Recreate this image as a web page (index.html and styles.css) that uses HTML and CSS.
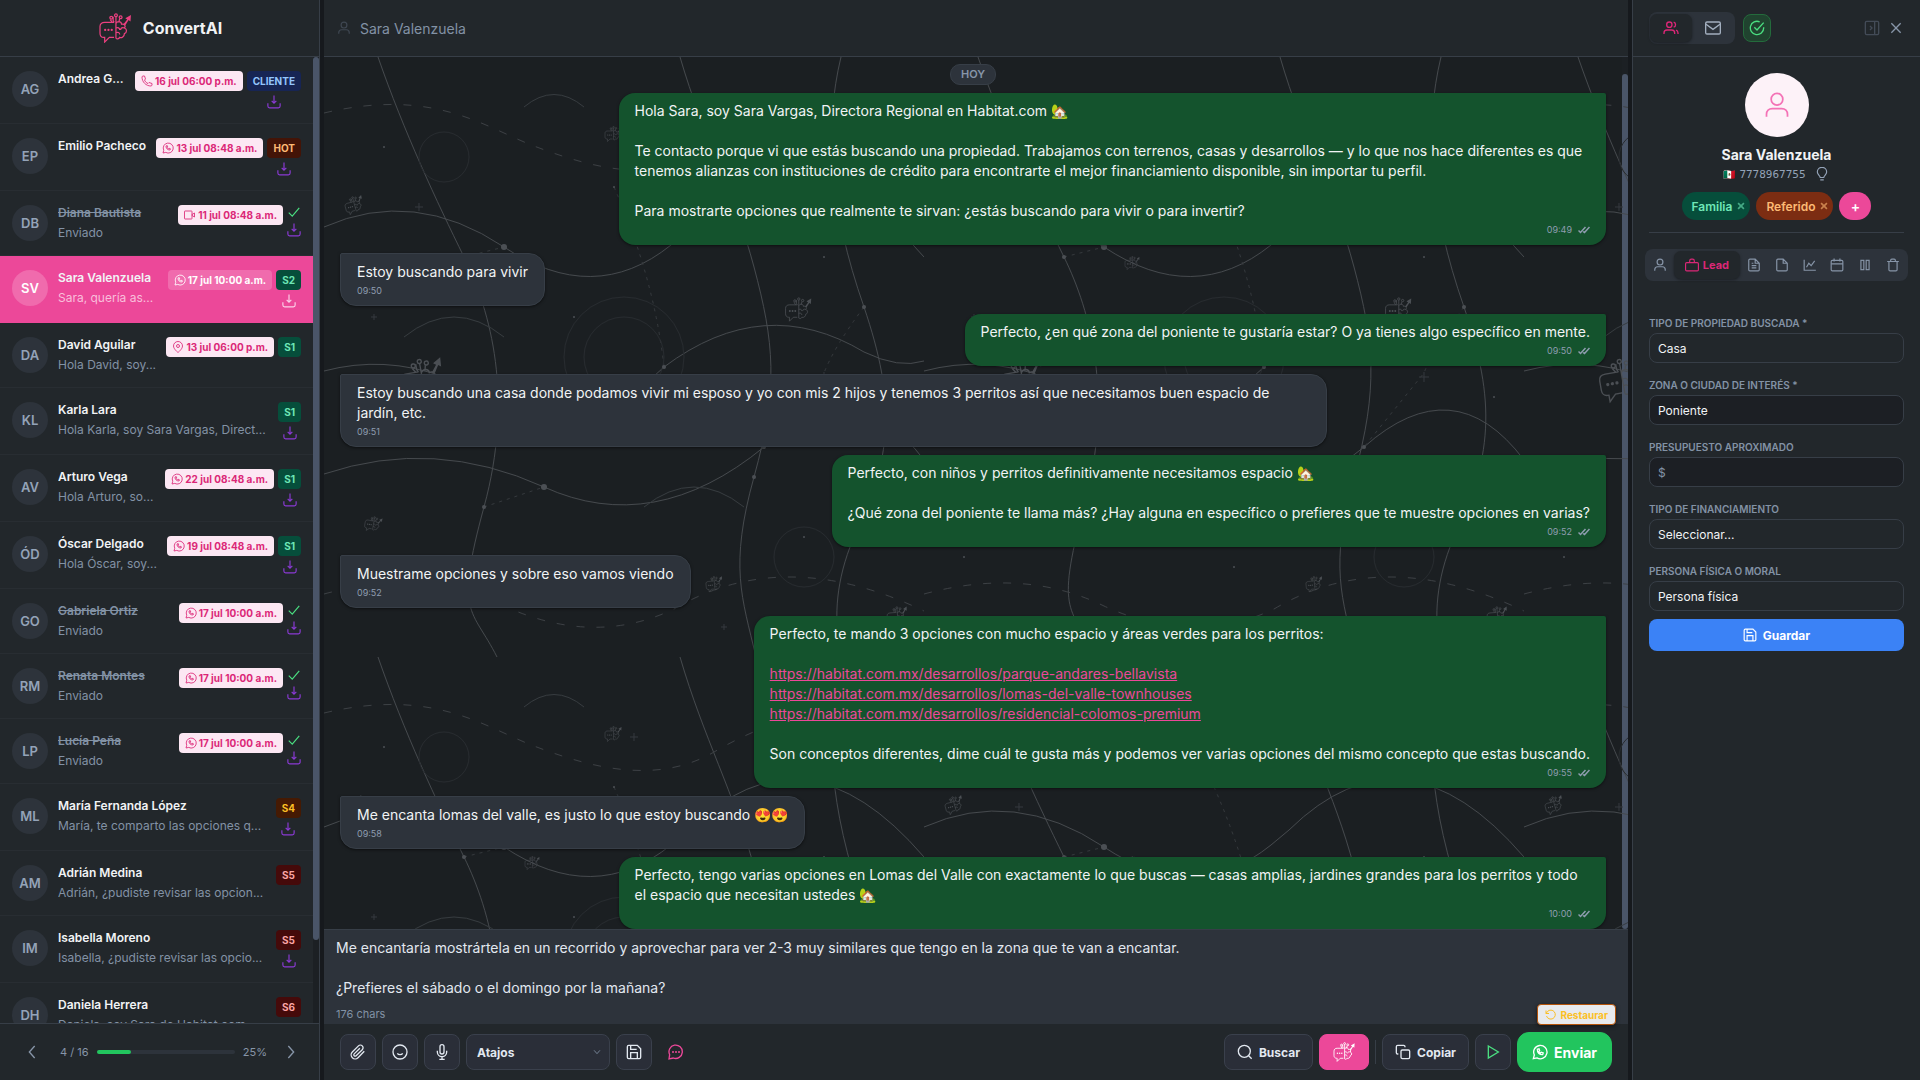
FILE: index.html
```html
<!DOCTYPE html>
<html lang="es">
<head>
  <meta charset="UTF-8" />
  <meta name="viewport" content="width=device-width, initial-scale=1" />
  <title>ConvertAI</title>
  <link rel="stylesheet" href="styles.css">
</head>
<body>
  <!-- Iconos -->
  <svg class="sprite" aria-hidden="true">
    <symbol id="logo" viewBox="0 0 36 32">
      <path d="M17 10H7c-3 0-5 1.600-5 4.500v7C2 24 3.500 26 6 26h1v5l5-5h5"/>
      <path d="M19 4v23M16 4v4l1 2M23 6l-1 4M13 7l2 3M19 11c2-3 6-2 6 1 3-1 5 2 3 4 3 1 3 5 0 6 0 3-3 5-5 4-1 2-3 2-4 1M19 16c2-1 4 0 4 2M28 16c-2-1-4 0-4 2M19 21c2-1 4 0 4 2"/>
      <circle cx="19" cy="2.500" r="1.500"/><circle cx="14" cy="5" r="1.500"/><circle cx="24" cy="4.500" r="1.500"/>
      <path class="solid" d="M27 12l4-5-2-1.500L35 2l-.5 7-2-1.500-3.500 5.500z"/>
      <circle class="solid" cx="7.500" cy="18" r="1.200"/><circle class="solid" cx="11" cy="18" r="1.200"/><circle class="solid" cx="14.500" cy="18" r="1.200"/>
    </symbol>
    <symbol id="user" viewBox="0 0 24 24"><circle cx="12" cy="7" r="5"/><path d="M3 22v-2c0-3 2-5 5-5h8c3 0 5 2 5 5v2"/></symbol>
    <symbol id="users" viewBox="0 0 24 24"><circle cx="9.500" cy="7" r="4"/><path d="M1.500 21v-1.500c0-3 2-4.500 4.500-4.500h7c2.500 0 4.500 1.500 4.500 4.500V21M16 3.200c3.800 1 3.800 6.600 0 7.600M22.500 21v-1.500c0-2-1-3.600-3-4.300"/></symbol>
    <symbol id="mail" viewBox="0 0 24 24"><rect x="1" y="3" width="22" height="18" rx="2"/><path d="M1 6l11 8 11-8"/></symbol>
    <symbol id="check-circle" viewBox="0 0 24 24"><path d="M22 11v1a10 10 0 1 1-6-9.200"/><path d="M8 11l4 4L22 4"/></symbol>
    <symbol id="panel" viewBox="0 0 24 24"><rect x="2" y="2" width="20" height="20" rx="2"/><path d="M16 2v20M9 9l3 3-3 3"/></symbol>
    <symbol id="close" viewBox="0 0 24 24"><path d="M5 5l14 14M19 5L5 19"/></symbol>
    <symbol id="bulb" viewBox="0 0 24 24"><path d="M9 18c0-3-5-5-5-9.500a8 8 0 0 1 16 0c0 4.500-5 6.500-5 9.500zM9 22h6"/></symbol>
    <symbol id="bag" viewBox="0 0 24 24"><rect x="1" y="8" width="22" height="14" rx="2"/><path d="M8 8V5a3 3 0 0 1 3-3h2a3 3 0 0 1 3 3v3"/></symbol>
    <symbol id="file" viewBox="0 0 24 24"><path d="M14 2H5a2 2 0 0 0-2 2v16a2 2 0 0 0 2 2h14a2 2 0 0 0 2-2V9zM14 2v7h7"/></symbol>
    <symbol id="file-text" viewBox="0 0 24 24"><path d="M14 2H5a2 2 0 0 0-2 2v16a2 2 0 0 0 2 2h14a2 2 0 0 0 2-2V9zM14 2v7h7M8 9h3M8 13h8M8 17h8"/></symbol>
    <symbol id="chart" viewBox="0 0 24 24"><path d="M2 3v18h20M6 16l4-7 4 4 6-8"/></symbol>
    <symbol id="calendar" viewBox="0 0 24 24"><rect x="2" y="4" width="20" height="18" rx="2"/><path d="M2 10h20M7 1v5M17 1v5"/></symbol>
    <symbol id="columns" viewBox="0 0 24 24"><rect x="5" y="4" width="5" height="16"/><rect x="14" y="4" width="5" height="16"/></symbol>
    <symbol id="trash" viewBox="0 0 24 24"><path d="M2 6h20M5 6v14a2 2 0 0 0 2 2h10a2 2 0 0 0 2-2V6M8 6V4a2 2 0 0 1 2-2h4a2 2 0 0 1 2 2v2"/></symbol>
    <symbol id="save" viewBox="0 0 24 24"><path d="M20 22H4a2 2 0 0 1-2-2V4a2 2 0 0 1 2-2h13l5 5v13a2 2 0 0 1-2 2zM17 22v-9H7v9M7 2v6h9"/></symbol>
    <symbol id="download" viewBox="0 0 24 24"><path d="M12 1v13M8 10l4 4 4-4M1.500 14v5a3 3 0 0 0 3 3h15a3 3 0 0 0 3-3v-5"/></symbol>
    <symbol id="check" viewBox="0 0 24 24"><path d="M3 13l6 6L21 5"/></symbol>
    <symbol id="whatsapp" viewBox="0 0 24 24"><path d="M2 22l1.500-5.500A10 10 0 1 1 7.500 20.800zM8 8c0 5 3 8 8 8l.8-2.500-3-1.200-1.200 1.200c-1-.5-1.600-1.200-2.200-2.200L11.500 10l-1-2.800z"/></symbol>
    <symbol id="phone" viewBox="0 0 24 24"><path d="M22 17v3c0 1-1 2-2 2C10 22 2 14 2 4c0-1 1-2 2-2h3l2 6-2 2c1 3 4 6 7 7l2-2z"/></symbol>
    <symbol id="video" viewBox="0 0 24 24"><rect x="1" y="4" width="15" height="16" rx="1"/><path d="M16 11l5-3v8l-5-3z"/></symbol>
    <symbol id="pin" viewBox="0 0 24 24"><path d="M21 10c0 6-9 13-9 13S3 16 3 10a9 9 0 0 1 18 0z"/><circle cx="12" cy="10" r="3"/></symbol>
    <symbol id="left" viewBox="0 0 24 24"><path d="M16 3l-8 9 8 9"/></symbol>
    <symbol id="right" viewBox="0 0 24 24"><path d="M8 3l8 9-8 9"/></symbol>
    <symbol id="down" viewBox="0 0 24 24"><path d="M5 8l7 8 7-8"/></symbol>
    <symbol id="clip" viewBox="0 0 24 24"><path d="M21.400 11L12 20.500a6 6 0 0 1-8.500-8.500l9.200-9.200a4 4 0 0 1 5.700 5.700l-9.200 9.200a2 2 0 0 1-2.900-2.900l8.500-8.400"/></symbol>
    <symbol id="smile" viewBox="0 0 24 24"><circle cx="12" cy="12" r="10.500"/><path d="M8 14c1.500 2.600 6.500 2.600 8 0"/></symbol>
    <symbol id="mic" viewBox="0 0 24 24"><rect x="9" y="1" width="6" height="14" rx="3"/><path d="M5 10v2a7 7 0 0 0 14 0v-2M12 19v4M8 23h8"/></symbol>
    <symbol id="chat" viewBox="0 0 24 24"><path d="M1.500 22.500l1-6.500A10 10 0 1 1 8 21z"/><circle class="solid" cx="7.500" cy="12" r="1.500"/><circle class="solid" cx="12" cy="12" r="1.500"/><circle class="solid" cx="16.500" cy="12" r="1.500"/></symbol>
    <symbol id="search" viewBox="0 0 24 24"><circle cx="11" cy="11" r="9"/><path d="M22 22l-4.500-4.500"/></symbol>
    <symbol id="copy" viewBox="0 0 24 24"><rect x="9" y="9" width="13" height="13" rx="2"/><path d="M5 15H4a2 2 0 0 1-2-2V4a2 2 0 0 1 2-2h9a2 2 0 0 1 2 2v1"/></symbol>
    <symbol id="play" viewBox="0 0 24 24"><path d="M5 3l15 9-15 9z"/></symbol>
    <symbol id="undo" viewBox="0 0 24 24"><path d="M2 3v6h6M3 14a9 9 0 1 0 2-9L2 9"/></symbol>
    <symbol id="ticks" viewBox="0 0 24 16"><path d="M1 9l4 4L15 2M10 11l3 2L23 2"/></symbol>
  </svg>

  <div class="app">
    <!-- Lista de contactos -->
    <aside class="sidebar">
      <header class="topbar brand">
        <svg class="icon brand-logo"><use href="#logo"/></svg>
        <span>ConvertAI</span>
      </header>
      <div class="list-wrap">
        <div class="list">
          <div class="item">
            <div class="avatar">AG</div>
            <div class="info"><div class="name">Andrea G...</div></div>
            <span class="date"><svg class="icon"><use href="#phone"/></svg>16 jul 06:00 p.m.</span>
            <div class="state"><span class="tag cliente">CLIENTE</span><svg class="icon dl"><use href="#download"/></svg></div>
          </div>
          <div class="item">
            <div class="avatar">EP</div>
            <div class="info"><div class="name">Emilio Pacheco</div></div>
            <span class="date"><svg class="icon"><use href="#whatsapp"/></svg>13 jul 08:48 a.m.</span>
            <div class="state"><span class="tag hot">HOT</span><svg class="icon dl"><use href="#download"/></svg></div>
          </div>
          <div class="item done">
            <div class="avatar">DB</div>
            <div class="info"><div class="name">Diana Bautista</div><div class="preview">Enviado</div></div>
            <span class="date"><svg class="icon"><use href="#video"/></svg>11 jul 08:48 a.m.</span>
            <div class="state"><svg class="icon ok"><use href="#check"/></svg><svg class="icon dl"><use href="#download"/></svg></div>
          </div>
          <div class="item active">
            <div class="avatar">SV</div>
            <div class="info"><div class="name">Sara Valenzuela</div><div class="preview">Sara, quería as...</div></div>
            <span class="date"><svg class="icon"><use href="#whatsapp"/></svg>17 jul 10:00 a.m.</span>
            <div class="state"><span class="tag green">S2</span><svg class="icon dl"><use href="#download"/></svg></div>
          </div>
          <div class="item">
            <div class="avatar">DA</div>
            <div class="info"><div class="name">David Aguilar</div><div class="preview">Hola David, soy...</div></div>
            <span class="date"><svg class="icon"><use href="#pin"/></svg>13 jul 06:00 p.m.</span>
            <div class="state"><span class="tag green">S1</span></div>
          </div>
          <div class="item">
            <div class="avatar">KL</div>
            <div class="info"><div class="name">Karla Lara</div><div class="preview">Hola Karla, soy Sara Vargas, Direct...</div></div>
            <div class="state"><span class="tag green">S1</span><svg class="icon dl"><use href="#download"/></svg></div>
          </div>
          <div class="item">
            <div class="avatar">AV</div>
            <div class="info"><div class="name">Arturo Vega</div><div class="preview">Hola Arturo, so...</div></div>
            <span class="date"><svg class="icon"><use href="#whatsapp"/></svg>22 jul 08:48 a.m.</span>
            <div class="state"><span class="tag green">S1</span><svg class="icon dl"><use href="#download"/></svg></div>
          </div>
          <div class="item">
            <div class="avatar">ÓD</div>
            <div class="info"><div class="name">Óscar Delgado</div><div class="preview">Hola Óscar, soy...</div></div>
            <span class="date"><svg class="icon"><use href="#whatsapp"/></svg>19 jul 08:48 a.m.</span>
            <div class="state"><span class="tag green">S1</span><svg class="icon dl"><use href="#download"/></svg></div>
          </div>
          <div class="item done">
            <div class="avatar">GO</div>
            <div class="info"><div class="name">Gabriela Ortiz</div><div class="preview">Enviado</div></div>
            <span class="date"><svg class="icon"><use href="#whatsapp"/></svg>17 jul 10:00 a.m.</span>
            <div class="state"><svg class="icon ok"><use href="#check"/></svg><svg class="icon dl"><use href="#download"/></svg></div>
          </div>
          <div class="item done">
            <div class="avatar">RM</div>
            <div class="info"><div class="name">Renata Montes</div><div class="preview">Enviado</div></div>
            <span class="date"><svg class="icon"><use href="#whatsapp"/></svg>17 jul 10:00 a.m.</span>
            <div class="state"><svg class="icon ok"><use href="#check"/></svg><svg class="icon dl"><use href="#download"/></svg></div>
          </div>
          <div class="item done">
            <div class="avatar">LP</div>
            <div class="info"><div class="name">Lucía Peña</div><div class="preview">Enviado</div></div>
            <span class="date"><svg class="icon"><use href="#whatsapp"/></svg>17 jul 10:00 a.m.</span>
            <div class="state"><svg class="icon ok"><use href="#check"/></svg><svg class="icon dl"><use href="#download"/></svg></div>
          </div>
          <div class="item">
            <div class="avatar">ML</div>
            <div class="info"><div class="name">María Fernanda López</div><div class="preview">María, te comparto las opciones q...</div></div>
            <div class="state"><span class="tag amber">S4</span><svg class="icon dl"><use href="#download"/></svg></div>
          </div>
          <div class="item">
            <div class="avatar">AM</div>
            <div class="info"><div class="name">Adrián Medina</div><div class="preview">Adrián, ¿pudiste revisar las opcion...</div></div>
            <div class="state"><span class="tag red">S5</span></div>
          </div>
          <div class="item">
            <div class="avatar">IM</div>
            <div class="info"><div class="name">Isabella Moreno</div><div class="preview">Isabella, ¿pudiste revisar las opcio...</div></div>
            <div class="state"><span class="tag red">S5</span><svg class="icon dl"><use href="#download"/></svg></div>
          </div>
          <div class="item">
            <div class="avatar">DH</div>
            <div class="info"><div class="name">Daniela Herrera</div><div class="preview">Daniela, soy Sara de Habitat.com</div></div>
            <div class="state"><span class="tag red">S6</span></div>
          </div>
        </div>
        <div class="scrollbar"><div class="thumb list-thumb"></div></div>
      </div>
      <footer class="pager">
        <button class="plain" aria-label="Anterior"><svg class="icon"><use href="#left"/></svg></button>
        <span>4 / 16</span>
        <div class="progress"><div class="progress-fill" style="width: 25%"></div></div>
        <span>25%</span>
        <button class="plain" aria-label="Siguiente"><svg class="icon"><use href="#right"/></svg></button>
      </footer>
    </aside>

    <div class="resizer"></div>

    <!-- Conversación -->
    <main class="chat">
      <header class="topbar chat-head">
        <svg class="icon"><use href="#user"/></svg>
        <span>Sara Valenzuela</span>
      </header>

      <div class="thread">
        <svg class="sky" aria-hidden="true">
          <defs>
            <pattern id="tile" width="600" height="600" patternUnits="userSpaceOnUse">
              <g class="orbits">
                <path d="M54 0C80 75 113 145 140 200S190 340 160 450S148 550 173 600"/>
                <path d="M356 0C380 82 410 135 430 210S455 330 430 420S418 540 432 600"/>
                <path d="M517 0C500 70 505 150 540 250C572 345 570 400 526 490C511 530 510 565 517 600"/>
                <path d="M0 170Q90 130 180 190T347 188L365 173Q480 60 600 200"/>
                <path d="M0 314Q60 298 120 320T250 370Q300 350 340 310Q440 235 540 295Q575 312 600 304"/>
                <path d="M0 417Q110 380 220 430T440 390Q530 310 600 403"/>
              </g>
              <g class="arcs">
                <path d="M200 50Q230 25 260 50M80 280Q130 240 180 280M320 450Q370 410 420 450"/>
              </g>
              <g class="dashes">
                <path d="M0 56C110 30 160 70 210 89S330 130 390 95S520 40 600 56"/>
                <path d="M0 537Q100 510 180 549Q270 590 350 552Q460 487 600 554"/>
              </g>
              <g class="links">
                <path d="M140 200L180 190M160 450L220 430M290 130Q330 220 340 310M540 250Q510 290 500 316L440 390"/>
              </g>
              <g class="rings">
                <circle cx="120" cy="100" r="25"/><circle cx="300" cy="300" r="40"/><circle cx="300" cy="300" r="60"/><circle cx="480" cy="500" r="30"/>
              </g>
              <g class="stars">
                <circle cx="180" cy="190" r="3"/><circle cx="220" cy="430" r="3"/>
                <circle cx="140" cy="200" r="2"/><circle cx="340" cy="310" r="2"/><circle cx="540" cy="250" r="2"/><circle cx="160" cy="450" r="2"/><circle cx="440" cy="390" r="2"/><circle cx="430" cy="420" r="2"/>
                <circle cx="60" cy="90" r="1"/><circle cx="290" cy="130" r="1"/><circle cx="250" cy="260" r="1"/><circle cx="500" cy="200" r="1"/><circle cx="570" cy="340" r="1"/><circle cx="40" cy="500" r="1"/><circle cx="310" cy="510" r="1"/><circle cx="480" cy="480" r="1"/>
              </g>
              <g class="plus">
                <path d="M306 80h8M310 76v8M91 150h8M95 146v8M47 260h6M50 257v6M397 570h6M400 567v6M495 320h10M500 315v10"/>
              </g>
              <g class="marks">
                <use href="#logo" x="280" y="69" width="18" height="16"/>
                <use href="#logo" x="200" y="199" width="16" height="14"/>
                <use href="#logo" x="20" y="139" width="20" height="18" transform="rotate(-15 30 148)"/>
                <use href="#logo" x="460" y="240" width="28" height="25"/>
                <use href="#logo" x="73" y="301" width="48" height="43" transform="rotate(-10 97 322)"/>
                <use href="#logo" x="40" y="459" width="18" height="16" transform="rotate(10 49 467)"/>
                <use href="#logo" x="381" y="519" width="18" height="16" transform="rotate(-5 390 527)"/>
                <use href="#logo" x="562" y="549" width="22" height="20" transform="rotate(-5 573 559)"/>
              </g>
            </pattern>
          </defs>
          <rect width="100%" height="100%" fill="url(#tile)"/>
        </svg>

        <div class="messages">
          <div class="day">HOY</div>
          <div class="bubble out">
            <p>Hola Sara, soy Sara Vargas, Directora Regional en Habitat.com 🏡</p>
            <br>
            <p>Te contacto porque vi que estás buscando una propiedad. Trabajamos con terrenos, casas y desarrollos — y lo que nos hace diferentes es que tenemos alianzas con instituciones de crédito para encontrarte el mejor financiamiento disponible, sin importar tu perfil.</p>
            <br>
            <p>Para mostrarte opciones que realmente te sirvan: ¿estás buscando para vivir o para invertir?</p>
            <div class="meta">09:49<svg class="icon"><use href="#ticks"/></svg></div>
          </div>
          <div class="bubble in">
            <p>Estoy buscando para vivir</p>
            <div class="meta">09:50</div>
          </div>
          <div class="bubble out">
            <p>Perfecto, ¿en qué zona del poniente te gustaría estar? O ya tienes algo específico en mente.</p>
            <div class="meta">09:50<svg class="icon"><use href="#ticks"/></svg></div>
          </div>
          <div class="bubble in">
            <p>Estoy buscando una casa donde podamos vivir mi esposo y yo con mis 2 hijos y tenemos 3 perritos así que necesitamos buen espacio de jardín, etc.</p>
            <div class="meta">09:51</div>
          </div>
          <div class="bubble out">
            <p>Perfecto, con niños y perritos definitivamente necesitamos espacio 🏡</p>
            <br>
            <p>¿Qué zona del poniente te llama más? ¿Hay alguna en específico o prefieres que te muestre opciones en varias?</p>
            <div class="meta">09:52<svg class="icon"><use href="#ticks"/></svg></div>
          </div>
          <div class="bubble in">
            <p>Muestrame opciones y sobre eso vamos viendo</p>
            <div class="meta">09:52</div>
          </div>
          <div class="bubble out">
            <p>Perfecto, te mando 3 opciones con mucho espacio y áreas verdes para los perritos:</p>
            <br>
            <p><a href="#">https://habitat.com.mx/desarrollos/parque-andares-bellavista</a></p>
            <p><a href="#">https://habitat.com.mx/desarrollos/lomas-del-valle-townhouses</a></p>
            <p><a href="#">https://habitat.com.mx/desarrollos/residencial-colomos-premium</a></p>
            <br>
            <p>Son conceptos diferentes, dime cuál te gusta más y podemos ver varias opciones del mismo concepto que estas buscando.</p>
            <div class="meta">09:55<svg class="icon"><use href="#ticks"/></svg></div>
          </div>
          <div class="bubble in">
            <p>Me encanta lomas del valle, es justo lo que estoy buscando 😍😍</p>
            <div class="meta">09:58</div>
          </div>
          <div class="bubble out">
            <p>Perfecto, tengo varias opciones en Lomas del Valle con exactamente lo que buscas — casas amplias, jardines grandes para los perritos y todo el espacio que necesitan ustedes 🏡</p>
            <div class="meta">10:00<svg class="icon"><use href="#ticks"/></svg></div>
          </div>
        </div>
        <div class="scrollbar"><div class="thumb thread-thumb"></div></div>
      </div>

      <div class="composer">
        <textarea rows="3" aria-label="Mensaje">Me encantaría mostrártela en un recorrido y aprovechar para ver 2-3 muy similares que tengo en la zona que te van a encantar.

¿Prefieres el sábado o el domingo por la mañana?</textarea>
        <span class="count">176 chars</span>
        <button class="restore"><svg class="icon"><use href="#undo"/></svg>Restaurar</button>
      </div>

      <div class="toolbar">
        <button class="tool square" aria-label="Adjuntar"><svg class="icon"><use href="#clip"/></svg></button>
        <button class="tool square" aria-label="Emoji"><svg class="icon"><use href="#smile"/></svg></button>
        <button class="tool square" aria-label="Audio"><svg class="icon"><use href="#mic"/></svg></button>
        <div class="shortcuts">
          <select class="tool" aria-label="Atajos"><option>Atajos</option></select>
          <svg class="icon"><use href="#down"/></svg>
        </div>
        <button class="tool square" aria-label="Guardar atajo"><svg class="icon"><use href="#save"/></svg></button>
        <button class="plain suggest" aria-label="Sugerencias"><svg class="icon"><use href="#chat"/></svg></button>
        <div class="spacer"></div>
        <button class="tool wide"><svg class="icon"><use href="#search"/></svg>Buscar</button>
        <button class="tool ai" aria-label="ConvertAI"><svg class="icon"><use href="#logo"/></svg></button>
        <div class="rule"></div>
        <button class="tool wide"><svg class="icon"><use href="#copy"/></svg>Copiar</button>
        <button class="tool square go" aria-label="Reproducir"><svg class="icon"><use href="#play"/></svg></button>
        <button class="tool send"><svg class="icon"><use href="#whatsapp"/></svg>Enviar</button>
      </div>
    </main>

    <div class="resizer"></div>

    <!-- Ficha del contacto -->
    <aside class="details">
      <header class="topbar details-head">
        <div class="switch">
          <button class="on" aria-label="Contacto"><svg class="icon"><use href="#users"/></svg></button>
          <button aria-label="Correo"><svg class="icon"><use href="#mail"/></svg></button>
        </div>
        <button class="done-btn" aria-label="Completar"><svg class="icon"><use href="#check-circle"/></svg></button>
        <div class="spacer"></div>
        <button class="plain dim" aria-label="Panel"><svg class="icon"><use href="#panel"/></svg></button>
        <button class="plain" aria-label="Cerrar"><svg class="icon"><use href="#close"/></svg></button>
      </header>

      <section class="profile">
        <div class="photo"><svg class="icon"><use href="#user"/></svg></div>
        <h2>Sara Valenzuela</h2>
        <div class="phone"><span class="flag">🇲🇽</span><span>7778967755</span><svg class="icon"><use href="#bulb"/></svg></div>
        <div class="labels">
          <span class="label familia">Familia<svg class="icon"><use href="#close"/></svg></span>
          <span class="label referido">Referido<svg class="icon"><use href="#close"/></svg></span>
          <button class="label add">+</button>
        </div>
      </section>

      <nav class="tabs">
        <button aria-label="Persona"><svg class="icon"><use href="#user"/></svg></button>
        <button class="on"><svg class="icon"><use href="#bag"/></svg>Lead</button>
        <button aria-label="Notas"><svg class="icon"><use href="#file-text"/></svg></button>
        <button aria-label="Archivos"><svg class="icon"><use href="#file"/></svg></button>
        <button aria-label="Métricas"><svg class="icon"><use href="#chart"/></svg></button>
        <button aria-label="Agenda"><svg class="icon"><use href="#calendar"/></svg></button>
        <button aria-label="Etapas"><svg class="icon"><use href="#columns"/></svg></button>
        <button aria-label="Eliminar"><svg class="icon"><use href="#trash"/></svg></button>
      </nav>

      <form class="form">
        <label for="tipo">Tipo de propiedad buscada *</label>
        <select id="tipo"><option>Casa</option></select>
        <label for="zona">Zona o ciudad de interés *</label>
        <input id="zona" type="text" value="Poniente">
        <label for="monto">Presupuesto aproximado</label>
        <input id="monto" type="text" placeholder="$">
        <label for="credito">Tipo de financiamiento</label>
        <select id="credito"><option>Seleccionar...</option></select>
        <label for="persona">Persona física o moral</label>
        <select id="persona"><option>Persona física</option></select>
        <button type="button" class="submit"><svg class="icon"><use href="#save"/></svg>Guardar</button>
      </form>
    </aside>
  </div>
</body>
</html>
```
FILE: styles.css
```css
* {
  box-sizing: border-box;
}

body {
  margin: 0;
  background: #16191d;
  color: #f1f3f5;
  font-family: Inter, "Noto Sans", sans-serif;
  font-size: 12px;
}

button, input, select, textarea {
  font-family: inherit;
  font-size: inherit;
  color: inherit;
  margin: 0;
}

button {
  display: flex;
  align-items: center;
  justify-content: center;
  border: 0;
  padding: 0;
  background: none;
  cursor: pointer;
}

p, h2 {
  margin: 0;
}

.sprite {
  display: none;
}

.icon {
  width: 16px;
  height: 16px;
  flex: none;
  fill: none;
  stroke: currentColor;
  stroke-width: 2;
}

.solid {
  fill: currentColor;
  stroke: none;
}

.app {
  display: flex;
  height: 100vh;
  overflow: hidden;
}

.topbar {
  display: flex;
  align-items: center;
  height: 57px;
  flex: none;
  border-bottom: 1px solid #373e47;
  background: #22272b;
}

.plain {
  color: #8795a8;
}

.spacer {
  flex: 1;
}

.resizer {
  width: 4px;
  flex: none;
  background: #16191d;
}

.scrollbar {
  width: 6px;
  flex: none;
  background: #1c2024;
}

.thumb {
  border-radius: 3px;
  background: #4a5568;
}

/* Barra lateral */
.sidebar {
  display: flex;
  flex-direction: column;
  width: 320px;
  flex: none;
  border-right: 1px solid #373e47;
  background: #22272b;
}

.brand {
  justify-content: center;
  gap: 10px;
  font-size: 16px;
  font-weight: 700;
}

.brand-logo {
  width: 36px;
  height: 30px;
  color: #ec4080;
  stroke-width: 1.3;
}

.list-wrap {
  display: flex;
  flex: 1;
  min-height: 0;
}

.list {
  flex: 1;
  min-width: 0;
  overflow: hidden;
}

.list-thumb {
  height: 91.4%;
}

.item {
  display: flex;
  align-items: flex-start;
  padding: 14px 12px;
  border-bottom: 1px solid #282d32;
}

.avatar {
  width: 36px;
  height: 36px;
  margin-right: 10px;
  flex: none;
  border-radius: 50%;
  background: #2d333b;
  color: #94a3b8;
  font-size: 13px;
  font-weight: 600;
  line-height: 36px;
  text-align: center;
}

.info {
  flex: 1;
  min-width: 0;
  margin-right: 8px;
}

.name, .preview {
  overflow: hidden;
  text-overflow: ellipsis;
  white-space: nowrap;
}

.name {
  margin-bottom: 4px;
  font-weight: 600;
  line-height: 16px;
}

.preview {
  color: #8292a5;
  line-height: 16px;
}

.done .name {
  color: #8292a5;
  text-decoration: line-through;
}

.date, .tag {
  height: 20px;
  flex: none;
  padding: 0 6px;
  border-radius: 4px;
  font-size: 10px;
  font-weight: 700;
  line-height: 20px;
}

.date {
  display: flex;
  align-items: center;
  gap: 2px;
  margin-right: 4px;
  background: #fce7f3;
  color: #db2777;
}

.date .icon {
  width: 12px;
  height: 12px;
  stroke-width: 1.7;
}

.state {
  display: flex;
  flex-direction: column;
  align-items: center;
  gap: 4px;
}

.cliente {
  background: #172554;
  color: #93c5fd;
}

.hot {
  background: #431407;
  color: #fdba74;
}

.green {
  background: #064e3b;
  color: #6ee7b7;
}

.amber {
  background: #451a03;
  color: #fbbf24;
}

.red {
  background: #450a0a;
  color: #fca5a5;
}

.dl {
  width: 14px;
  height: 14px;
  color: #8a3ad4;
}

.ok {
  width: 14px;
  height: 14px;
  color: #4ade80;
}

.active {
  border-color: #ec4899;
  background: #ec4899;
}

.active .avatar {
  background: #f06bad;
  color: #fff;
}

.active .preview {
  color: #f9bedb;
}

.active .date {
  background: #f06bad;
  color: #fff;
}

.active .dl {
  color: #fbcfe8;
}

.pager {
  display: flex;
  align-items: center;
  gap: 8px;
  height: 57px;
  flex: none;
  padding: 0 16px 0 20px;
  border-top: 1px solid #373e47;
  color: #8795a8;
  font-size: 11px;
}

.pager .plain {
  width: 24px;
  height: 24px;
}

.pager span:first-of-type {
  margin-left: 8px;
}

.pager span:last-of-type {
  margin-right: 4px;
}

.progress {
  flex: 1;
  height: 4px;
  border-radius: 2px;
  background: #2d333b;
}

.progress-fill {
  height: 4px;
  border-radius: 2px;
  background: #22c55e;
}

/* Conversación */
.chat {
  display: flex;
  flex-direction: column;
  flex: 1;
  min-width: 0;
}

.chat-head {
  gap: 8px;
  padding-left: 12px;
  color: #8292a5;
  font-size: 14px;
}

.chat-head .icon {
  height: 14px;
  color: #3f4752;
}

.thread {
  display: flex;
  position: relative;
  flex: 1;
  min-height: 0;
  background: #1b1f22;
}

.sky {
  position: absolute;
  width: 100%;
  height: 100%;
  fill: none;
}

.orbits, .arcs, .dashes {
  stroke: #45494d;
}

.arcs {
  stroke: #363b3f;
}

.dashes {
  stroke: #3c4044;
  stroke-dasharray: 8 12;
}

.links {
  stroke: #34383c;
  stroke-dasharray: 3 5;
}

.rings {
  stroke: #272b2f;
}

.stars {
  fill: #4b4f54;
}

.plus {
  stroke: #34383d;
}

.marks {
  color: #4b4f54;
  stroke: #4b4f54;
}

.messages {
  display: flex;
  position: relative;
  flex-direction: column;
  flex: 1;
  gap: 8px;
  min-width: 0;
  overflow: hidden;
  padding: 7px 16px 0;
}

.day {
  align-self: center;
  height: 21px;
  padding: 0 10px;
  border: 1px solid #373e47;
  border-radius: 10px;
  background: #2d333b;
  color: #8795a8;
  font-size: 11px;
  font-weight: 600;
  line-height: 19px;
}

.bubble {
  max-width: 78%;
  padding: 8px 16px 7px;
  border-radius: 16px;
  box-shadow: 0 1px 3px rgba(0, 0, 0, 0.5);
  font-size: 14px;
  line-height: 20px;
}

.out {
  align-self: flex-end;
  border-top-right-radius: 2px;
  background: #14532d;
}

.in {
  align-self: flex-start;
  padding-bottom: 6px;
  border: 1px solid #373e47;
  border-top-left-radius: 2px;
  background: #2d333b;
}

.bubble a {
  color: #ec4899;
}

.meta {
  display: flex;
  align-items: center;
  gap: 6px;
  margin-top: 1px;
  color: #8f9db0;
  font-size: 9px;
  line-height: 16px;
}

.out .meta {
  justify-content: flex-end;
}

.meta .icon {
  width: 12px;
  height: 8px;
  stroke-width: 3;
}

.thread-thumb {
  height: 98%;
  margin-top: 17px;
}

.composer {
  position: relative;
  flex: none;
  height: 95px;
  padding: 8px 12px 0;
  border-top: 1px solid #373e47;
  background: #2d333b;
}

.composer textarea {
  display: block;
  width: 100%;
  padding: 0;
  border: 0;
  outline: 0;
  background: none;
  color: #e2e8f0;
  font-size: 14px;
  line-height: 20px;
  resize: none;
}

.count {
  display: block;
  margin-top: 8px;
  color: #8292a5;
  font-size: 11px;
  line-height: 16px;
}

.restore {
  position: absolute;
  right: 12px;
  bottom: -1px;
  gap: 3px;
  height: 21px;
  padding: 0 7px;
  border: 1px solid #b45309;
  border-radius: 4px;
  background: #e8eaed;
  box-shadow: 0 1px 4px rgba(0, 0, 0, 0.5);
  color: #fbbf24;
  font-size: 10px;
  font-weight: 700;
}

.restore .icon {
  width: 12px;
  height: 12px;
}

.toolbar {
  display: flex;
  align-items: center;
  gap: 6px;
  height: 56px;
  flex: none;
  padding: 0 16px;
  background: #22272b;
}

.tool {
  gap: 6px;
  height: 36px;
  border: 1px solid #3a404c;
  border-radius: 8px;
  background: #2a2e38;
  color: #e2e8f0;
  font-weight: 700;
}

.square {
  width: 36px;
}

.shortcuts {
  position: relative;
  width: 144px;
}

.shortcuts select {
  width: 100%;
  padding: 0 10px;
  appearance: none;
}

.shortcuts .icon {
  position: absolute;
  top: 13px;
  right: 8px;
  width: 10px;
  height: 10px;
  color: #8292a5;
}

.suggest {
  width: 36px;
  color: #ec4899;
}

.wide {
  padding: 0 12px;
}

.ai {
  width: 50px;
  border-color: #ec4899;
  background: #ec4899;
  color: #fff;
}

.ai .icon {
  width: 26px;
  height: 20px;
  stroke-width: 1.4;
}

.rule {
  width: 1px;
  height: 24px;
  background: #373e47;
}

.go {
  color: #4ade80;
}

.send {
  height: 40px;
  padding: 0 14px;
  border-color: #22c55e;
  border-radius: 12px;
  background: #22c55e;
  color: #fff;
  font-size: 14px;
}

/* Ficha */
.details {
  width: 288px;
  flex: none;
  border-left: 1px solid #373e47;
  background: #22272b;
}

.details-head {
  gap: 8px;
  padding: 0 16px;
}

.switch {
  display: flex;
  padding: 2px 1px;
  border-radius: 8px;
  background: #2d333b;
}

.switch button {
  width: 42px;
  height: 28px;
  border-radius: 7px;
  color: #a3afbf;
}

.switch .on, .tabs .on {
  background: #22272b;
  box-shadow: 0 1px 3px rgba(0, 0, 0, 0.4);
  color: #db2777;
}

.done-btn {
  width: 28px;
  height: 28px;
  border: 1px solid #246b3c;
  border-radius: 8px;
  background: #20432f;
  color: #4ade80;
}

.dim {
  color: #434b57;
}

.profile {
  display: flex;
  flex-direction: column;
  align-items: center;
  margin: 0 16px;
  padding: 16px 0 12px;
  border-bottom: 1px solid #373e47;
}

.photo {
  display: flex;
  align-items: center;
  justify-content: center;
  width: 64px;
  height: 64px;
  margin-bottom: 8px;
  border-radius: 50%;
  background: #fdf2f8;
  color: #f472b6;
}

.photo .icon {
  width: 28px;
  height: 28px;
  stroke-width: 1.5;
}

.profile h2 {
  font-size: 14px;
  font-weight: 700;
  line-height: 20px;
}

.phone {
  display: flex;
  align-items: center;
  gap: 4px;
  height: 18px;
  margin-bottom: 9px;
  color: #94a3b8;
  font-family: "DejaVu Sans Mono", monospace;
  font-size: 11px;
}

.flag {
  font-size: 10px;
}

.phone .icon {
  height: 14px;
  margin-left: 4px;
}

.labels {
  display: flex;
  gap: 6px;
}

.label {
  display: flex;
  align-items: center;
  gap: 4px;
  height: 28px;
  padding: 0 4px 0 10px;
  border-radius: 14px;
  font-weight: 600;
}

.label .icon {
  width: 10px;
  height: 10px;
  opacity: 0.6;
  stroke-width: 4;
}

.familia {
  background: #064e3b;
  color: #6ee7b7;
}

.referido {
  background: #7c2d12;
  color: #fdba74;
}

.add {
  width: 32px;
  padding: 0;
  background: #ec4899;
  color: #fff;
  font-size: 14px;
}

.tabs {
  display: flex;
  align-items: center;
  height: 32px;
  margin: 16px 12px 0;
  padding: 2px 1px;
  border-radius: 8px;
  background: #2d333b;
}

.tabs button {
  flex: 1;
  gap: 4px;
  height: 28px;
  border-radius: 7px;
  color: #8795a8;
  font-size: 11px;
  font-weight: 700;
}

.tabs .on {
  flex: none;
  width: 66px;
}

.tabs .icon {
  width: 14px;
  height: 14px;
}

.form {
  padding: 34px 16px 0;
}

.form label {
  display: block;
  margin-bottom: 2px;
  color: #8292a5;
  font-size: 10px;
  font-weight: 600;
  line-height: 16px;
  text-transform: uppercase;
}

.form input, .form select {
  display: block;
  width: 100%;
  height: 30px;
  margin-bottom: 14px;
  padding: 0 8px;
  border: 1px solid #373e47;
  border-radius: 8px;
  background: #22272b;
  color: #f1f3f5;
  appearance: none;
}

.form input {
  background: #1c1f24;
}

.form input::placeholder {
  color: #8292a5;
}

.form .submit {
  gap: 6px;
  width: 100%;
  height: 32px;
  margin-top: -6px;
  border-radius: 8px;
  background: #3b82f6;
  color: #fff;
  font-weight: 700;
}

.submit .icon {
  width: 14px;
  height: 14px;
}
```
